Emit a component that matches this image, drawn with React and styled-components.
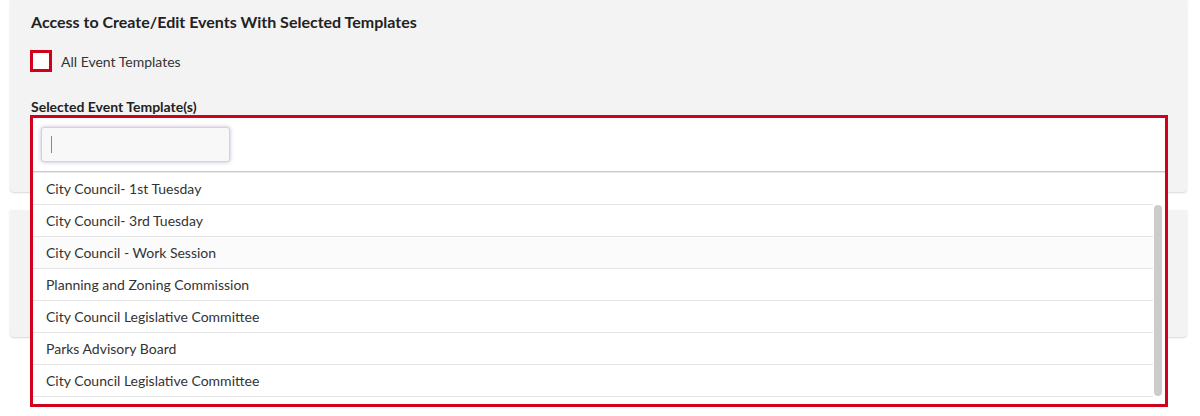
import React from 'react';
import styled, {createGlobalStyle} from 'styled-components';

const GlobalStyle = createGlobalStyle`
  html, body {
    margin: 0;
    padding: 0;
    background: #ffffff;
    font-family: Lato, "Open Sans", Arial, sans-serif;
    color: #333333;
  }
  #root {
    min-height: 416px;
  }
`;

const Page = styled.div`
  width: 1177px;
  margin-left: 10px;
  display: flex;
  flex-direction: column;
  gap: 18px;
`;

const Panel = styled.div`
  background: #f3f3f3;
  border-radius: 0 0 4px 4px;
  box-shadow: 0 1px 2px rgba(0, 0, 0, 0.16);
  padding: 0 20px;
  height: ${(p) => p.$height};
  box-sizing: border-box;
  display: flex;
  flex-direction: column;
`;

const Heading = styled.h2`
  margin: 12px 0 0 1px;
  font-size: 16px;
  line-height: 20px;
  font-weight: 700;
  color: #222222;
`;

const CheckRow = styled.label`
  display: flex;
  align-items: center;
  gap: 9px;
  margin-top: 18px;
  font-size: 14px;
  color: #333333;
`;

const Box = styled.span`
  width: 16px;
  height: 16px;
  border: 3px solid #d0021b;
  background: #ffffff;
  flex: none;
`;

const FieldLabel = styled.div`
  margin: 27px 0 0 1px;
  font-size: 14px;
  line-height: 16px;
  font-weight: 700;
  color: #222222;
`;

const SelectAnchor = styled.div`
  position: relative;
  height: 56px;
`;

const Dropdown = styled.div`
  position: absolute;
  top: 0;
  left: 0;
  right: -1px;
  height: 292px;
  box-sizing: border-box;
  border: 3px solid #d0021b;
  background: #ffffff;
  display: flex;
  flex-direction: column;
  z-index: 2;
`;

const SearchArea = styled.div`
  padding: 9px 8px;
  border-bottom: 1px solid #c9c9c9;
  box-shadow: 0 1px 0 #ececec;
`;

const SearchBox = styled.div`
  width: 189px;
  height: 35px;
  box-sizing: border-box;
  background: #f8f8f8;
  border: 1px solid #d8d0de;
  border-radius: 3px;
  box-shadow: 0 0 4px rgba(120, 80, 150, 0.4);
  display: flex;
  align-items: center;
  padding-left: 9px;
`;

const Caret = styled.span`
  width: 1px;
  height: 17px;
  background: #e07020;
`;

const ListWrap = styled.div`
  flex: 1;
  display: flex;
  overflow: hidden;
  margin-top: 1px;
`;

const List = styled.ul`
  flex: 1;
  margin: 0;
  padding: 0;
  list-style: none;
`;

const Item = styled.li`
  height: 31px;
  border-bottom: 1px solid #e4e4e4;
  background: ${(p) => (p.$shade ? '#fbfbfb' : '#ffffff')};
  padding-left: 13px;
  display: flex;
  align-items: center;
  font-size: 14px;
  color: #333333;
`;

const Track = styled.div`
  width: 12px;
  padding: 32px 3px 7px 1px;
  box-sizing: border-box;
  display: flex;
`;

const Thumb = styled.div`
  width: 8px;
  height: 191px;
  background: #cccccc;
  border-radius: 4px;
`;

const templates = [
  'City Council- 1st Tuesday',
  'City Council- 3rd Tuesday',
  'City Council - Work Session',
  'Planning and Zoning Commission',
  'City Council Legislative Committee',
  'Parks Advisory Board',
  'City Council Legislative Committee',
];

const App = () => {
  return (
    <>
      <GlobalStyle />
      <Page>
        <Panel $height="192px">
          <Heading>Access to Create/Edit Events With Selected Templates</Heading>
          <CheckRow>
            <Box />
            All Event Templates
          </CheckRow>
          <FieldLabel>Selected Event Template(s)</FieldLabel>
          <SelectAnchor>
            <Dropdown>
              <SearchArea>
                <SearchBox>
                  <Caret />
                </SearchBox>
              </SearchArea>
              <ListWrap>
                <List>
                  {templates.map((name, i) => (
                    <Item key={i} $shade={i === 2}>{name}</Item>
                  ))}
                </List>
                <Track>
                  <Thumb />
                </Track>
              </ListWrap>
            </Dropdown>
          </SelectAnchor>
        </Panel>
        <Panel $height="127px" />
      </Page>
    </>
  );
};

export default App;
